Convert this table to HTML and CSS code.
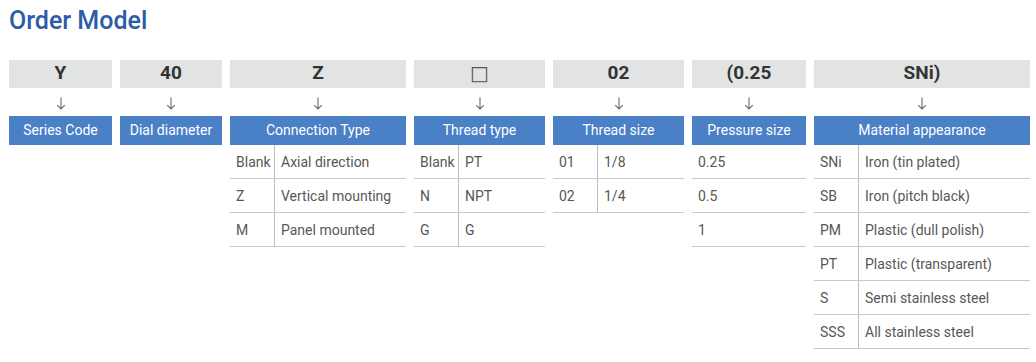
FILE: index.html
```html
<!DOCTYPE html>
<html>
<head>
<meta charset="utf-8">
<link rel="stylesheet" href="styles.css">
</head>
<body>
<h1 class="title">Order Model</h1>
<div class="model">
  <div class="col c1">
    <div class="code">Y</div>
    <div class="arrow"><svg width="10" height="13" viewBox="0 0 10 13"><path d="M5 0.5V12M1.2 8.2L5 12L8.8 8.2"/></svg></div>
    <div class="head">Series Code</div>
  </div>
  <div class="col c2">
    <div class="code">40</div>
    <div class="arrow"><svg width="10" height="13" viewBox="0 0 10 13"><path d="M5 0.5V12M1.2 8.2L5 12L8.8 8.2"/></svg></div>
    <div class="head">Dial diameter</div>
  </div>
  <div class="col c3">
    <div class="code">Z</div>
    <div class="arrow"><svg width="10" height="13" viewBox="0 0 10 13"><path d="M5 0.5V12M1.2 8.2L5 12L8.8 8.2"/></svg></div>
    <div class="head">Connection Type</div>
    <div class="row"><span class="k">Blank</span><span class="v">Axial direction</span></div>
    <div class="row"><span class="k">Z</span><span class="v">Vertical mounting</span></div>
    <div class="row"><span class="k">M</span><span class="v">Panel mounted</span></div>
  </div>
  <div class="col c4">
    <div class="code sq">□</div>
    <div class="arrow"><svg width="10" height="13" viewBox="0 0 10 13"><path d="M5 0.5V12M1.2 8.2L5 12L8.8 8.2"/></svg></div>
    <div class="head">Thread type</div>
    <div class="row"><span class="k">Blank</span><span class="v">PT</span></div>
    <div class="row"><span class="k">N</span><span class="v">NPT</span></div>
    <div class="row"><span class="k">G</span><span class="v">G</span></div>
  </div>
  <div class="col c5">
    <div class="code">02</div>
    <div class="arrow"><svg width="10" height="13" viewBox="0 0 10 13"><path d="M5 0.5V12M1.2 8.2L5 12L8.8 8.2"/></svg></div>
    <div class="head">Thread size</div>
    <div class="row"><span class="k">01</span><span class="v">1/8</span></div>
    <div class="row"><span class="k">02</span><span class="v">1/4</span></div>
  </div>
  <div class="col c6">
    <div class="code">(0.25</div>
    <div class="arrow"><svg width="10" height="13" viewBox="0 0 10 13"><path d="M5 0.5V12M1.2 8.2L5 12L8.8 8.2"/></svg></div>
    <div class="head">Pressure size</div>
    <div class="row"><span class="single">0.25</span></div>
    <div class="row"><span class="single">0.5</span></div>
    <div class="row"><span class="single">1</span></div>
  </div>
  <div class="col c7">
    <div class="code">SNi)</div>
    <div class="arrow"><svg width="10" height="13" viewBox="0 0 10 13"><path d="M5 0.5V12M1.2 8.2L5 12L8.8 8.2"/></svg></div>
    <div class="head">Material appearance</div>
    <div class="row"><span class="k">SNi</span><span class="v">Iron (tin plated)</span></div>
    <div class="row"><span class="k">SB</span><span class="v">Iron (pitch black)</span></div>
    <div class="row"><span class="k">PM</span><span class="v">Plastic (dull polish)</span></div>
    <div class="row"><span class="k">PT</span><span class="v">Plastic (transparent)</span></div>
    <div class="row"><span class="k">S</span><span class="v">Semi stainless steel</span></div>
    <div class="row"><span class="k">SSS</span><span class="v">All stainless steel</span></div>
  </div>
</div>
</body>
</html>
```

FILE: styles.css
```css
* { box-sizing: border-box; }
html, body { margin: 0; padding: 0; background: #fff; }
body {
  font-family: Roboto, "Noto Sans", sans-serif;
  color: #575757;
  padding: 0 0 0 9px;
}
.title {
  margin: 0;
  padding-top: 4px;
  height: 60px;
  font-size: 25px;
  line-height: 34px;
  font-weight: 500;
  color: #2c5ba9;
}
.model {
  display: flex;
  gap: 8px;
  align-items: flex-start;
}
.col { display: flex; flex-direction: column; }
.c1 { width: 103px; }
.c2 { width: 102px; }
.c3 { width: 176px; }
.c4 { width: 131px; }
.c5 { width: 131px; }
.c6 { width: 114px; }
.c7 { width: 216px; }
.code {
  height: 28px;
  background: #e2e3e3;
  color: #333;
  font-weight: 700;
  font-size: 19px;
  line-height: 25px;
  text-align: center;
}
.code.sq {
  font-family: "DejaVu Sans", sans-serif;
  font-weight: 400;
  font-size: 20px;
  line-height: 26px;
  color: #555;
}
.arrow {
  height: 28px;
  display: flex;
  justify-content: center;
  align-items: flex-start;
  padding-top: 9px;
}
.arrow svg {
  display: block;
  fill: none;
  stroke: #6a6a6a;
  stroke-width: 1.1;
}
.head {
  height: 29px;
  background: #4a80c6;
  color: #fff;
  font-size: 14px;
  line-height: 28px;
  text-align: center;
}
.row {
  display: flex;
  height: 34px;
  border-bottom: 1px solid #c8c8c8;
  font-size: 14px;
  line-height: 34px;
}
.k {
  width: 45px;
  flex: none;
  padding-left: 6px;
  border-right: 1px solid #bdbdbd;
}
.v { padding-left: 6px; }
.single { padding-left: 6px; }
```
